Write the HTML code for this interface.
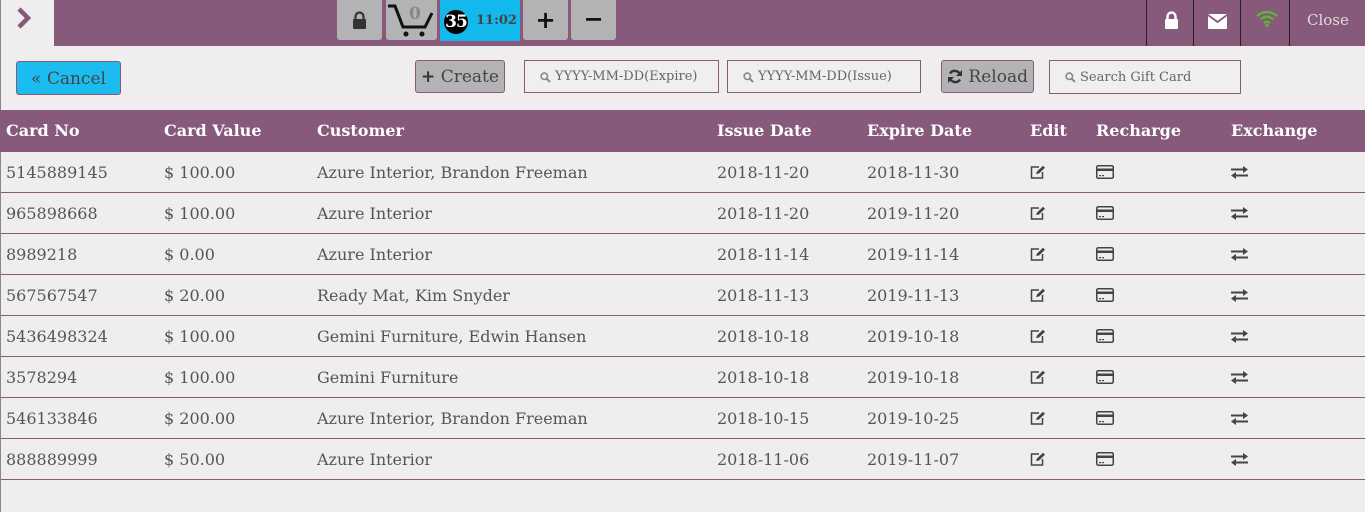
<!DOCTYPE html>
<html><head><meta charset="utf-8">
<style>
*{margin:0;padding:0;box-sizing:border-box}
body{width:1365px;height:512px;background:#efedee;font-family:"DejaVu Serif","Liberation Serif",serif;color:#555;position:relative;overflow:hidden}
.a{position:absolute}
.top{left:54px;top:0;width:1311px;height:46px;background:#875a7b}
.tb{background:#b3b3b6;height:40px;top:0;border-radius:0 0 3px 3px}
.sep{top:0;width:1px;height:46px;background:#222}
.btn{border:1px solid #875a7b;border-radius:3px;font-size:17px;color:#444;text-align:center}
.inp{border:1px solid #875a7b;background:#f0eeef;font-size:13px;color:#666;padding-left:30px;line-height:31px}
.inp svg{position:absolute;left:15px;top:11px}
.hd{left:0;top:110px;width:1365px;height:42px;background:#875a7b}
.h{color:#fff;font-weight:bold;font-size:16px;top:121px}
.row{left:1px;width:1364px;height:41px;border-bottom:1px solid #875a7b}
.c{font-size:16px;color:#555}
</style></head><body>
<div class="a" style="left:0;top:0;width:1px;height:512px;background:#888"></div>
<div class="a" style="left:16px;top:6px">
<svg width="16" height="26" viewBox="0 0 16 26"><path d="M3 3 L12 12 L3 21" stroke="#875a7b" stroke-width="4.5" fill="none"/></svg></div>
<div class="a top"></div>
<div class="a tb" style="left:337px;width:45px"><svg class="a" style="left:15px;top:11px" width="15" height="18" viewBox="0 0 15 18"><path d="M3.5 8V5.5a4 4 0 0 1 8 0V8" stroke="#333" stroke-width="2.2" fill="none"/><rect x="1" y="8" width="13" height="10" rx="1" fill="#333"/></svg></div>
<div class="a tb" style="left:386px;width:51px"><svg class="a" style="left:0;top:2px" width="51" height="36" viewBox="0 0 51 36"><path d="M2 4 L9 4 L17 25 L39 25 L46 11" stroke="#111" stroke-width="3" fill="none"/><circle cx="20" cy="32" r="2.5" fill="#111"/><circle cx="36" cy="32" r="2.5" fill="#111"/><text x="23" y="17" font-family="DejaVu Serif" font-weight="bold" font-size="17" fill="#888">0</text></svg></div>
<div class="a" style="left:440px;top:0;width:80px;height:41px;background:#13b8ec"></div>
<div class="a" style="left:444px;top:10px;width:24px;height:24px;border-radius:50%;background:#000;color:#fff;font-weight:bold;font-size:17px;text-align:center;line-height:24px;letter-spacing:-1px">35</div>
<div class="a" style="left:476px;top:13px;font-weight:bold;font-size:13px;color:#444">11:02</div>
<div class="a tb" style="left:523px;width:45px;font-family:'DejaVu Sans',sans-serif;font-size:24px;font-weight:bold;color:#111;text-align:center;line-height:40px">+</div>
<div class="a tb" style="left:571px;width:45px;font-family:'DejaVu Sans',sans-serif;font-size:24px;font-weight:bold;color:#111;text-align:center;line-height:38px">−</div>
<div class="a sep" style="left:1146px"></div><div class="a sep" style="left:1193px"></div><div class="a sep" style="left:1240px"></div><div class="a sep" style="left:1289px"></div>
<svg class="a" style="left:1164px;top:11px" width="15" height="18" viewBox="0 0 15 18"><path d="M3.5 8V5.5a4 4 0 0 1 8 0V8" stroke="#fff" stroke-width="2.4" fill="none"/><rect x="1" y="8" width="13" height="10" rx="1" fill="#fff"/></svg>
<svg class="a" style="left:1208px;top:14px" width="19" height="15" viewBox="0 0 19 15"><rect x="0" y="0" width="19" height="15" rx="1" fill="#fff"/><path d="M0 1 L9.5 8 L19 1" stroke="#875a7b" stroke-width="1.8" fill="none"/></svg>
<svg class="a" style="left:1256px;top:11px" width="22" height="16" viewBox="0 0 22 16"><path d="M1 5 Q11 -3 21 5 M4.5 8.5 Q11 3 17.5 8.5 M8 12 Q11 9.5 14 12" stroke="#5cb531" stroke-width="2.3" fill="none"/><circle cx="11" cy="14.5" r="1.6" fill="#5cb531"/></svg>
<div class="a" style="left:1307px;top:11px;color:#ddd;font-size:15px">Close</div>

<div class="a btn" style="left:16px;top:61px;width:105px;height:34px;background:#1bbcef;line-height:35px">« Cancel</div>
<div class="a btn" style="left:415px;top:60px;width:90px;height:33px;background:#b3b3b6;line-height:32px;color:#444"><b style="font-family:'DejaVu Sans';color:#333">+</b> Create</div>
<div class="a inp" style="left:524px;top:60px;width:195px;height:33px"><svg width="11" height="11" viewBox="0 0 11 11"><circle cx="4.3" cy="4.3" r="3.2" stroke="#888" stroke-width="1.6" fill="none"/><path d="M6.6 6.6 L10 10" stroke="#888" stroke-width="2"/></svg>YYYY-MM-DD(Expire)</div>
<div class="a inp" style="left:727px;top:60px;width:194px;height:33px"><svg width="11" height="11" viewBox="0 0 11 11"><circle cx="4.3" cy="4.3" r="3.2" stroke="#888" stroke-width="1.6" fill="none"/><path d="M6.6 6.6 L10 10" stroke="#888" stroke-width="2"/></svg>YYYY-MM-DD(Issue)</div>
<div class="a btn" style="left:941px;top:60px;width:93px;height:33px;background:#b3b3b6;line-height:32px;color:#444"><svg width="16" height="15" viewBox="0 0 16 15" style="vertical-align:-2px"><path d="M13 6 A5.5 5.5 0 0 0 3 4.5 M3 9 A5.5 5.5 0 0 0 13 10.5" stroke="#333" stroke-width="2.4" fill="none"/><path d="M15 1 L15 7 L9 7Z M1 14 L1 8 L7 8Z" fill="#333"/></svg> Reload</div>
<div class="a inp" style="left:1049px;top:60px;width:192px;height:34px;line-height:33px"><svg width="11" height="11" viewBox="0 0 11 11"><circle cx="4.3" cy="4.3" r="3.2" stroke="#888" stroke-width="1.6" fill="none"/><path d="M6.6 6.6 L10 10" stroke="#888" stroke-width="2"/></svg>Search Gift Card</div>

<div class="a hd"></div>
<div class="a h" style="left:6px">Card No</div>
<div class="a h" style="left:164px">Card Value</div>
<div class="a h" style="left:317px">Customer</div>
<div class="a h" style="left:717px">Issue Date</div>
<div class="a h" style="left:867px">Expire Date</div>
<div class="a h" style="left:1030px">Edit</div>
<div class="a h" style="left:1096px">Recharge</div>
<div class="a h" style="left:1231px">Exchange</div>

<div id="rows"></div>
<script>
var d=[["5145889145","$ 100.00","Azure Interior, Brandon Freeman","2018-11-20","2018-11-30"],
["965898668","$ 100.00","Azure Interior","2018-11-20","2019-11-20"],
["8989218","$ 0.00","Azure Interior","2018-11-14","2019-11-14"],
["567567547","$ 20.00","Ready Mat, Kim Snyder","2018-11-13","2019-11-13"],
["5436498324","$ 100.00","Gemini Furniture, Edwin Hansen","2018-10-18","2019-10-18"],
["3578294","$ 100.00","Gemini Furniture","2018-10-18","2019-10-18"],
["546133846","$ 200.00","Azure Interior, Brandon Freeman","2018-10-15","2019-10-25"],
["888889999","$ 50.00","Azure Interior","2018-11-06","2019-11-07"]];
var h="",xs=[6,164,317,717,867];
d.forEach(function(r,i){var t=152+i*41;
h+='<div class="a row" style="top:'+t+'px"></div>';
r.forEach(function(v,j){h+='<div class="a c" style="left:'+xs[j]+'px;top:'+(t+11)+'px">'+v+'</div>';});
h+='<svg class="a" style="left:1030px;top:'+(t+13)+'px" width="17" height="14" viewBox="0 0 17 14"><path d="M9 2H1.5v11h11V7" stroke="#444" stroke-width="1.5" fill="none"/><path d="M6 9 L7 6.5 L13 0.8 L15 2.8 L9 8.5Z" fill="#444"/></svg>';
h+='<svg class="a" style="left:1096px;top:'+(t+13)+'px" width="18" height="14" viewBox="0 0 18 14"><rect x="0.75" y="0.75" width="16.5" height="12.5" rx="1.5" stroke="#444" stroke-width="1.5" fill="none"/><rect x="1" y="3.5" width="16" height="2.5" fill="#444"/><rect x="3" y="10" width="2" height="1.2" fill="#444"/><rect x="6" y="10" width="2" height="1.2" fill="#444"/></svg>';
h+='<svg class="a" style="left:1231px;top:'+(t+14)+'px" width="17" height="13" viewBox="0 0 17 13"><path d="M0 3.5H13" stroke="#444" stroke-width="2"/><path d="M12 0 L17 3.5 L12 7Z" fill="#444"/><path d="M4 9.5H17" stroke="#444" stroke-width="2"/><path d="M5 6 L0 9.5 L5 13Z" fill="#444"/></svg>';
});
document.getElementById("rows").innerHTML=h;
</script>
</body></html>
